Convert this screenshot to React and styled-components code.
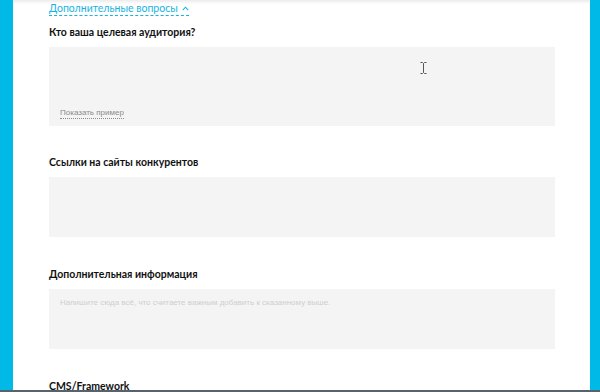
import styled, { createGlobalStyle } from "styled-components";

const GlobalStyle = createGlobalStyle`
  html, body {
    margin: 0;
    padding: 0;
    background: #ffffff;
  }
  body {
    font-family: Lato, "Open Sans", "Liberation Sans", sans-serif;
  }
`;

const Screen = styled.div`
  width: 600px;
  height: 392px;
  display: flex;
  flex-direction: column;
  overflow: hidden;
`;

const Stage = styled.div`
  flex: 1;
  display: flex;
  min-height: 0;
`;

const SideStrip = styled.div`
  width: ${(p) => p.$width}px;
  flex-shrink: 0;
  background: #00b9e7;
`;

const Sheet = styled.main`
  position: relative;
  flex: 1;
  background: #ffffff;
  padding: 2px 35px 0 36px;
  overflow: hidden;
  &::before {
    content: "";
    position: absolute;
    left: 0;
    right: 0;
    top: 0;
    height: 4px;
    background: linear-gradient(rgba(0, 0, 0, 0.08), rgba(0, 0, 0, 0));
  }
`;

const ToggleRow = styled.div`
  display: flex;
`;

const Toggle = styled.span`
  display: flex;
  align-items: center;
  gap: 4px;
  font-size: 10.5px;
  line-height: 13px;
  color: #19b3e2;
  border-bottom: 1px dashed #19b3e2;
`;

const Question = styled.section`
  margin-top: ${(p) => p.$gap}px;
`;

const Label = styled.div`
  font-size: 10.5px;
  line-height: 14px;
  font-weight: 700;
  color: #111111;
  margin-bottom: 8px;
`;

const Field = styled.div`
  position: relative;
  height: ${(p) => p.$height}px;
  background: #f4f4f4;
  padding: 9px 11px;
  box-sizing: border-box;
  display: flex;
  flex-direction: column;
  justify-content: ${(p) => (p.$bottom ? "flex-end" : "flex-start")};
`;

const Hint = styled.span`
  align-self: flex-start;
  font-family: "Liberation Sans", Arial, sans-serif;
  font-size: 8px;
  line-height: 10px;
  color: #8a8a8a;
  border-bottom: 1px dotted #8a8a8a;
  margin-bottom: -2px;
`;

const Placeholder = styled.span`
  font-family: "Liberation Sans", Arial, sans-serif;
  font-size: 8px;
  line-height: 10px;
  color: #cfcfcf;
`;

const Cursor = styled.svg`
  position: absolute;
  left: 371px;
  top: 15px;
`;

const Taskbar = styled.div`
  height: 2px;
  background: #58626c;
`;

export default function App() {
  return (
    <>
      <GlobalStyle />
      <Screen>
        <Stage>
          <SideStrip $width={13} />
          <Sheet>
            <ToggleRow>
              <Toggle>
                Дополнительные вопросы
                <svg width="7" height="5" viewBox="0 0 7 5">
                  <path d="M0.8 4.2 L3.5 1.2 L6.2 4.2" fill="none" stroke="#19b3e2" strokeWidth="1.1" />
                </svg>
              </Toggle>
            </ToggleRow>

            <Question $gap={9}>
              <Label>Кто ваша целевая аудитория?</Label>
              <Field $height={79} $bottom>
                <Hint>Показать пример</Hint>
                <Cursor width="7" height="12" viewBox="0 0 7 12">
                  <path d="M0.5 0.5 H2.5 L3.5 1.5 L4.5 0.5 H6.5 M3.5 1.5 V10.5 M0.5 11.5 H2.5 L3.5 10.5 L4.5 11.5 H6.5" fill="none" stroke="#555" strokeWidth="1" />
                </Cursor>
              </Field>
            </Question>

            <Question $gap={29}>
              <Label>Ссылки на сайты конкурентов</Label>
              <Field $height={60} />
            </Question>

            <Question $gap={30}>
              <Label>Дополнительная информация</Label>
              <Field $height={60}>
                <Placeholder>
                  Напишите сюда всё, что считаете важным добавить к сказанному выше.
                </Placeholder>
              </Field>
            </Question>

            <Question $gap={30}>
              <Label>CMS/Framework</Label>
            </Question>
          </Sheet>
          <SideStrip $width={10} />
        </Stage>
        <Taskbar />
      </Screen>
    </>
  );
}
